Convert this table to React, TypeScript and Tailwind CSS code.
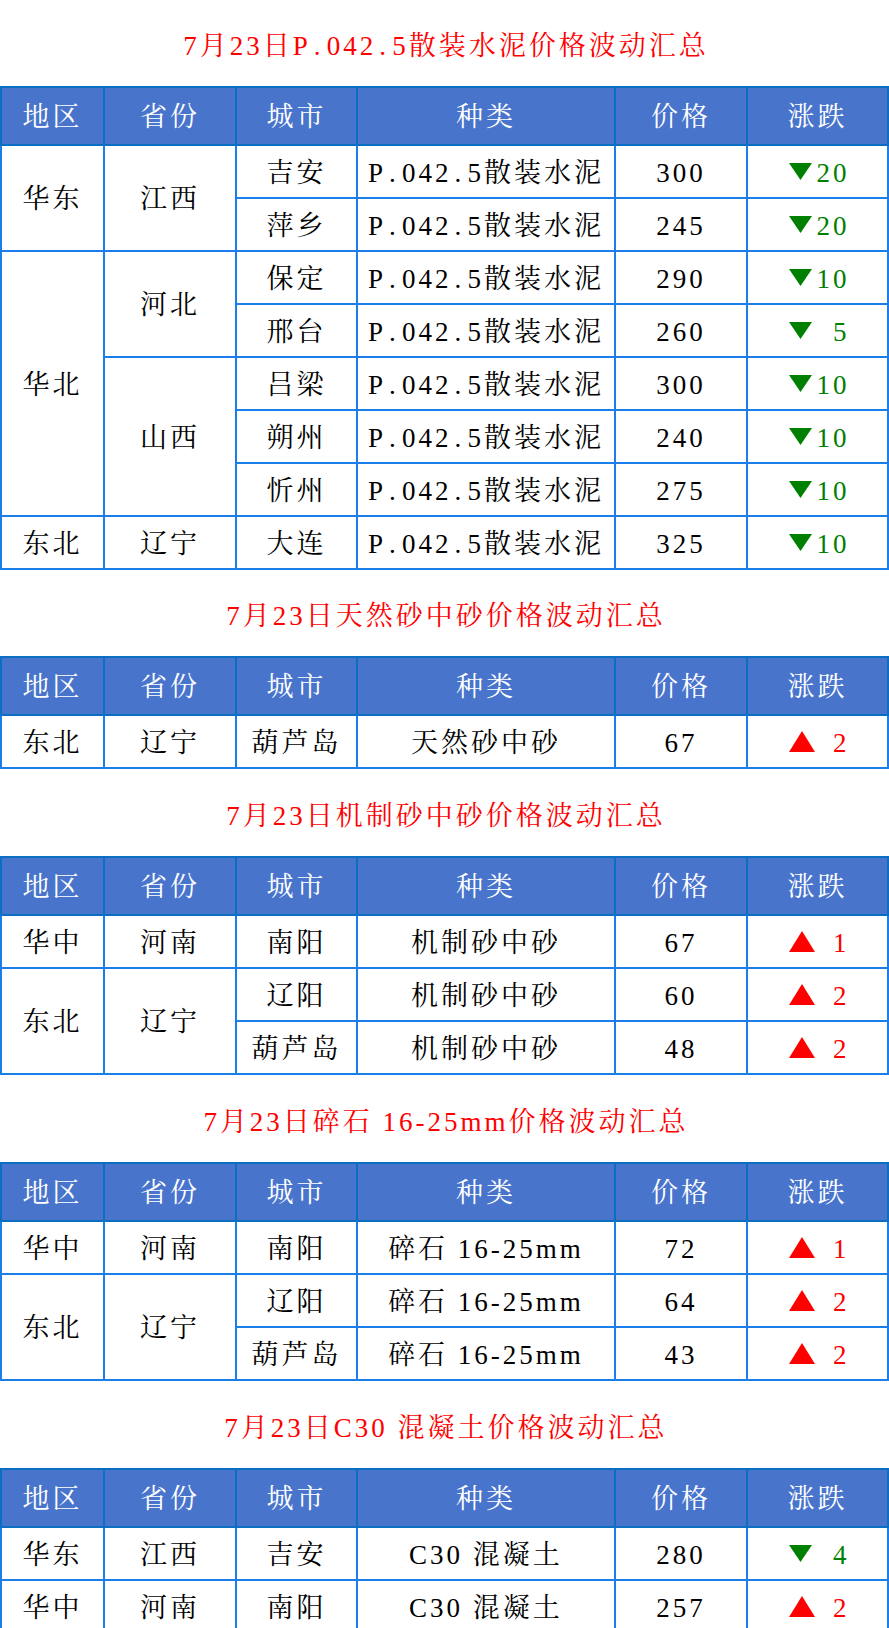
import React from "react";

const FONT = {
  fontFamily:
    '"Liberation Serif", "Noto Serif CJK SC", "Noto Sans CJK SC", serif',
};

type Change = { dir: "up" | "down"; n: string };

function Tri({ dir }: { dir: "up" | "down" }) {
  if (dir === "down") {
    return (
      <svg width="23" height="17" viewBox="0 0 23 17" className="block">
        <polygon points="0,0 23,0 11.5,17" fill="#008000" />
      </svg>
    );
  }
  return (
    <svg width="26" height="21" viewBox="0 0 26 21" className="block">
      <polygon points="13,0 26,21 0,21" fill="#ff0000" />
    </svg>
  );
}

function ChangeCell({ c }: { c: Change }) {
  const color = c.dir === "down" ? "text-[#008000]" : "text-[#ff0000]";
  return (
    <div className="bg-white flex items-center justify-center">
      <div className="w-[58px] flex items-center justify-between">
        <span className="-mt-[1px]">
          <Tri dir={c.dir} />
        </span>
        <span className={`${color} tracking-[3px] -mr-[3px] leading-none pt-[3px]`}>
          {c.n}
        </span>
      </div>
    </div>
  );
}

// Render text with half-width periods (like SimSun)
function Txt({ s }: { s: string }) {
  const parts = s.split(".");
  return (
    <>
      {parts.map((p, i) => (
        <React.Fragment key={i}>
          {p}
          {i < parts.length - 1 && (
            <span className="inline-block w-[16px] pl-[3px] text-left">.</span>
          )}
        </React.Fragment>
      ))}
    </>
  );
}

function Cell({ children, span }: { children: React.ReactNode; span?: string }) {
  return (
    <div
      className={`bg-white flex items-center justify-center text-black pt-[3px] ${span ?? ""}`}
    >
      {children}
    </div>
  );
}

const COLS = "grid grid-cols-[101px_130px_119px_256px_130px_139px] gap-[2px]";

function Header() {
  const h = ["地区", "省份", "城市", "种类", "价格", "涨跌"];
  return (
    <div className={`${COLS} bg-[#0a6fc2] p-[2px]`}>
      {h.map((t) => (
        <div
          key={t}
          className="h-[56px] bg-[#4874cc] text-white flex items-center justify-center pt-[3px]"
        >
          {t}
        </div>
      ))}
    </div>
  );
}

function Title({ text, h }: { text: string; h: string }) {
  return (
    <div className={`${h} flex items-center justify-center pt-[7px] text-[#ff0000]`}>
      <span className="-mr-[3px]">
        <Txt s={text} />
      </span>
    </div>
  );
}

type Row = {
  region?: [string, number];
  prov?: [string, number];
  city: string;
  kind: string;
  price: string;
  change: Change;
};

const spanCls: Record<number, string> = {
  1: "",
  2: "row-span-2",
  3: "row-span-3",
  5: "row-span-5",
};

function Table({ rows }: { rows: Row[] }) {
  return (
    <div className="flex flex-col">
      <Header />
      <div className={`${COLS} auto-rows-[51px] bg-[#1a7fea] px-[2px] pb-[2px]`}>
        {rows.map((r, i) => (
          <React.Fragment key={i}>
            {r.region && (
              <Cell span={`col-start-1 ${spanCls[r.region[1]]}`}>{r.region[0]}</Cell>
            )}
            {r.prov && (
              <Cell span={`col-start-2 ${spanCls[r.prov[1]]}`}>{r.prov[0]}</Cell>
            )}
            <Cell span="col-start-3">{r.city}</Cell>
            <Cell span="col-start-4">
              <span>
                <Txt s={r.kind} />
              </span>
            </Cell>
            <Cell span="col-start-5">{r.price}</Cell>
            <div className="col-start-6 grid">
              <ChangeCell c={r.change} />
            </div>
          </React.Fragment>
        ))}
      </div>
    </div>
  );
}

const CEM = "P.042.5散装水泥";
const d = (n: string): Change => ({ dir: "down", n });
const u = (n: string): Change => ({ dir: "up", n });

const t1: Row[] = [
  { region: ["华东", 2], prov: ["江西", 2], city: "吉安", kind: CEM, price: "300", change: d("20") },
  { city: "萍乡", kind: CEM, price: "245", change: d("20") },
  { region: ["华北", 5], prov: ["河北", 2], city: "保定", kind: CEM, price: "290", change: d("10") },
  { city: "邢台", kind: CEM, price: "260", change: d("\u00a05") },
  { prov: ["山西", 3], city: "吕梁", kind: CEM, price: "300", change: d("10") },
  { city: "朔州", kind: CEM, price: "240", change: d("10") },
  { city: "忻州", kind: CEM, price: "275", change: d("10") },
  { region: ["东北", 1], prov: ["辽宁", 1], city: "大连", kind: CEM, price: "325", change: d("10") },
];

const t2: Row[] = [
  { region: ["东北", 1], prov: ["辽宁", 1], city: "葫芦岛", kind: "天然砂中砂", price: "67", change: u("2") },
];

const t3: Row[] = [
  { region: ["华中", 1], prov: ["河南", 1], city: "南阳", kind: "机制砂中砂", price: "67", change: u("1") },
  { region: ["东北", 2], prov: ["辽宁", 2], city: "辽阳", kind: "机制砂中砂", price: "60", change: u("2") },
  { city: "葫芦岛", kind: "机制砂中砂", price: "48", change: u("2") },
];

const STONE = "碎石 16-25mm";
const t4: Row[] = [
  { region: ["华中", 1], prov: ["河南", 1], city: "南阳", kind: STONE, price: "72", change: u("1") },
  { region: ["东北", 2], prov: ["辽宁", 2], city: "辽阳", kind: STONE, price: "64", change: u("2") },
  { city: "葫芦岛", kind: STONE, price: "43", change: u("2") },
];

const t5: Row[] = [
  { region: ["华东", 1], prov: ["江西", 1], city: "吉安", kind: "C30 混凝土", price: "280", change: d("\u00a04") },
  { region: ["华中", 1], prov: ["河南", 1], city: "南阳", kind: "C30 混凝土", price: "257", change: u("2") },
];

export default function App() {
  return (
    <div
      className="w-[889px] bg-white text-[27px] tracking-[3px] leading-none"
      style={FONT}
    >
      <Title h="h-[86px]" text="7月23日P.042.5散装水泥价格波动汇总" />
      <Table rows={t1} />
      <Title h="h-[86px]" text="7月23日天然砂中砂价格波动汇总" />
      <Table rows={t2} />
      <Title h="h-[87px]" text="7月23日机制砂中砂价格波动汇总" />
      <Table rows={t3} />
      <Title h="h-[87px]" text="7月23日碎石 16-25mm价格波动汇总" />
      <Table rows={t4} />
      <Title h="h-[87px]" text="7月23日C30 混凝土价格波动汇总" />
      <Table rows={t5} />
    </div>
  );
}
